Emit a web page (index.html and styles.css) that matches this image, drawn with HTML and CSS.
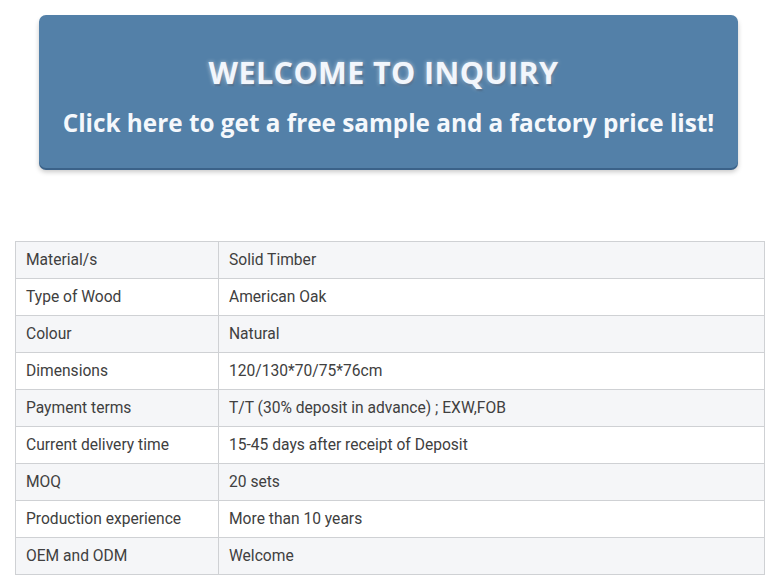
FILE: index.html
```html
<!DOCTYPE html>
<html>
<head>
<meta charset="utf-8">
<link rel="stylesheet" href="styles.css">
</head>
<body>
<div class="page">
  <div class="banner-wrap">
    <div class="banner">
      <div class="title">WELCOME TO INQUIRY</div>
      <div class="subtitle">Click here to get a free sample and a factory price list!</div>
    </div>
  </div>
  <table class="specs">
    <tr class="alt"><td class="k">Material/s</td><td>Solid Timber</td></tr>
    <tr><td class="k">Type of Wood</td><td>American Oak</td></tr>
    <tr class="alt"><td class="k">Colour</td><td>Natural</td></tr>
    <tr><td class="k">Dimensions</td><td>120/130*70/75*76cm</td></tr>
    <tr class="alt"><td class="k">Payment terms</td><td>T/T (30% deposit in advance) ; EXW,FOB</td></tr>
    <tr><td class="k">Current delivery time</td><td>15-45 days after receipt of Deposit</td></tr>
    <tr class="alt"><td class="k">MOQ</td><td>20 sets</td></tr>
    <tr><td class="k">Production experience</td><td>More than 10 years</td></tr>
    <tr class="alt"><td class="k">OEM and ODM</td><td>Welcome</td></tr>
  </table>
</div>
</body>
</html>
```
FILE: styles.css
```css
html, body { margin: 0; padding: 0; background: #fff; }
.page { padding: 15px 0 0 0; }
.banner-wrap { padding: 0 40px 0 39px; }
.banner {
  height: 153px;
  background: #5380a8;
  border-radius: 7px;
  box-shadow: 0 2px 0 #3b6289, 0 4px 5px rgba(0,0,0,0.22);
  display: flex;
  flex-direction: column;
  align-items: center;
  color: #fff;
  font-family: "Open Sans", "Noto Sans", sans-serif;
  font-weight: bold;
}
.title {
  margin-top: 36px;
  margin-right: 10px;
  font-size: 30.5px;
  line-height: 42px;
  letter-spacing: 0.4px;
  color: #f2f6fc;
  text-shadow: 0 0 4px rgba(255,255,255,0.6), 1px 2px 2px rgba(30,50,80,0.5);
}
.subtitle {
  margin-top: 14px;
  font-size: 24.3px;
  line-height: 32px;
  color: #f5f8fc;
}
.specs {
  margin: 73px 0 0 15px;
  width: 750px;
  border-collapse: collapse;
  font-family: Roboto, "Liberation Sans", sans-serif;
  font-size: 15.6px;
  color: #404040;
}
.specs td {
  border: 1px solid #cfd1d4;
  height: 37px;
  padding: 0 10px;
  box-sizing: border-box;
}
.specs td.k { width: 203px; }
.specs tr.alt td { background: #f5f6f8; }
```
